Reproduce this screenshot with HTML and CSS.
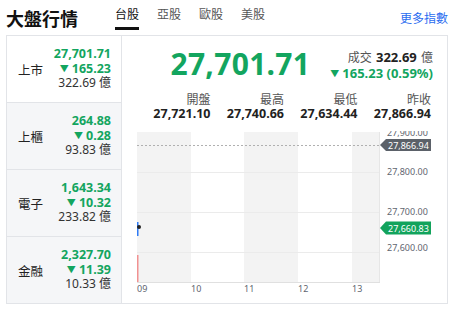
FILE: index.html
```html
<!DOCTYPE html>
<html lang="zh-Hant">

<head>
	<meta charset="utf-8">
	<meta name="viewport" content="width=device-width, initial-scale=1.0">
	<title>大盤行情</title>
	<link rel="stylesheet" href="styles.css">
</head>

<body>
	<header class="top">
		<h1 class="title">大盤行情</h1>
		<nav class="tabs">
			<a class="tab active">台股</a>
			<a class="tab">亞股</a>
			<a class="tab">歐股</a>
			<a class="tab">美股</a>
		</nav>
		<a class="more">更多指數</a>
	</header>

	<section class="board">
		<aside class="markets">
			<div class="market">
				<span class="name">上市</span>
				<div class="nums">
					<div class="price">27,701.71</div>
					<div class="change"><span class="arrow">▼</span>165.23</div>
					<div class="vol">322.69 億</div>
				</div>
			</div>
			<div class="market">
				<span class="name">上櫃</span>
				<div class="nums">
					<div class="price">264.88</div>
					<div class="change"><span class="arrow">▼</span>0.28</div>
					<div class="vol">93.83 億</div>
				</div>
			</div>
			<div class="market">
				<span class="name">電子</span>
				<div class="nums">
					<div class="price">1,643.34</div>
					<div class="change"><span class="arrow">▼</span>10.32</div>
					<div class="vol">233.82 億</div>
				</div>
			</div>
			<div class="market">
				<span class="name">金融</span>
				<div class="nums">
					<div class="price">2,327.70</div>
					<div class="change"><span class="arrow">▼</span>11.39</div>
					<div class="vol">10.33 億</div>
				</div>
			</div>
		</aside>

		<div class="detail">
			<div class="quote">
				<div class="last">27,701.71</div>
				<div class="side">
					<div class="turnover"><span class="lbl">成交</span> <b>322.69</b> <span class="lbl">億</span></div>
					<div class="diff"><span class="arrow">▼</span>165.23 (0.59%)</div>
				</div>
			</div>

			<div class="stats">
				<div class="stat"><span class="lbl">開盤</span><b>27,721.10</b></div>
				<div class="stat"><span class="lbl">最高</span><b>27,740.66</b></div>
				<div class="stat"><span class="lbl">最低</span><b>27,634.44</b></div>
				<div class="stat"><span class="lbl">昨收</span><b>27,866.94</b></div>
			</div>

			<svg class="chart" width="325" height="170" viewBox="0 0 325 170">
				<!-- bands -->
				<rect x="15" y="1" width="54" height="150" fill="#f3f3f3" />
				<rect x="69" y="1" width="53" height="150" fill="#ffffff" />
				<rect x="122" y="1" width="54" height="150" fill="#f3f3f3" />
				<rect x="176" y="1" width="54" height="150" fill="#ffffff" />
				<rect x="230" y="1" width="28" height="150" fill="#f3f3f3" />
				<!-- grid -->
				<line x1="15" y1="41.5" x2="258" y2="41.5" stroke="#ebebeb" />
				<line x1="15" y1="81.5" x2="258" y2="81.5" stroke="#ebebeb" />
				<line x1="15" y1="121.5" x2="258" y2="121.5" stroke="#ebebeb" />
				<line x1="15" y1="151.5" x2="258" y2="151.5" stroke="#e0e0e0" />
				<line x1="257.5" y1="1" x2="257.5" y2="151" stroke="#e6e6e6" />
				<line x1="15" y1="14.5" x2="258" y2="14.5" stroke="#b0b0b0" stroke-dasharray="2 2" />
				<!-- series -->
				<rect x="15" y="124" width="1.5" height="27" fill="#f19191" />
				<rect x="15" y="91" width="1.5" height="14" fill="#2f7bf5" />
				<circle cx="17" cy="96" r="2" fill="#222" />
				<!-- y axis -->
				<g class="axis">
					<text x="265" y="5">27,900.00</text>
					<text x="265" y="44">27,800.00</text>
					<text x="265" y="84">27,700.00</text>
					<text x="265" y="120">27,600.00</text>
				</g>
				<path d="M258,14 L264,8 H309 V20 H264 Z" fill="#5b6169" />
				<text class="tag" x="266" y="17.5">27,866.94</text>
				<path d="M258,97 L264,90.5 H309 V103.5 H264 Z" fill="#12a35c" />
				<text class="tag" x="266" y="100.5">27,660.83</text>
				<!-- x axis -->
				<g class="axis">
					<text x="15" y="161">09</text>
					<text x="69" y="161">10</text>
					<text x="122" y="161">11</text>
					<text x="176" y="161">12</text>
					<text x="230" y="161">13</text>
				</g>
			</svg>
		</div>
	</section>
</body>

</html>
```

FILE: styles.css
```css
body {
	margin: 0;
	padding: 0 4px 0 6px;
	background-color: white;
	color: #222;
	font-family: "Noto Sans", "Noto Sans CJK TC", sans-serif;
}

/*____________________Header____________________*/

.top {
	display: flex;
	align-items: center;
	height: 35px;
}

.title {
	margin: 0;
	font-size: 18px;
	font-weight: 700;
	color: #111;
	font-family: "Noto Sans CJK TC", sans-serif;
}

.tabs {
	display: flex;
	gap: 18px;
	margin-left: 37px;
	height: 35px;
}

.tab {
	display: flex;
	align-items: center;
	height: 30px;
	font-size: 12px;
	color: #555;
	font-family: "Noto Sans CJK TC", sans-serif;
	border-bottom: 3px solid transparent;
	box-sizing: border-box;
	margin-top: 0;
}

.tab.active {
	color: #111;
	border-bottom-color: #111;
}

.more {
	margin-left: auto;
	font-size: 12px;
	color: #2a6cf0;
	font-family: "Noto Sans CJK TC", sans-serif;
}

/*____________________Board____________________*/

.board {
	display: flex;
	border: 1px solid #e2e4e8;
	width: 442px;
	box-sizing: border-box;
}

.markets {
	width: 115px;
	border-right: 1px solid #e2e4e8;
	box-sizing: border-box;
}

.market {
	display: flex;
	align-items: center;
	justify-content: space-between;
	height: 66px;
	padding: 0 10px 0 11px;
	background-color: #f5f6f8;
	border-top: 1px solid #e2e4e8;
}

.market:first-child {
	background-color: white;
	border-top: none;
}

.name {
	font-size: 12.5px;
	font-family: "Noto Sans CJK TC", sans-serif;
	color: #222;
}

.nums {
	text-align: right;
	line-height: 14.5px;
}

.price,
.change {
	font-size: 12.5px;
	font-weight: 700;
	color: #13a55f;
}

.arrow {
	font-size: 9px;
	margin-right: 3px;
	vertical-align: 1px;
}

.vol {
	font-size: 12px;
	color: #333;
}

/*____________________Detail____________________*/

.detail {
	flex: 1;
	display: flex;
	flex-direction: column;
}

.quote {
	display: flex;
	justify-content: flex-end;
	align-items: center;
	gap: 20px;
	height: 55px;
	padding-right: 14px;
}

.last {
	font-size: 30px;
	font-weight: 700;
	color: #13a55f;
	letter-spacing: 0.3px;
}

.side {
	text-align: right;
	line-height: 16px;
	margin-top: 2px;
}

.lbl {
	font-size: 12px;
	color: #555;
	font-family: "Noto Sans CJK TC", sans-serif;
}

.turnover b {
	font-size: 13px;
	color: #222;
}

.diff {
	font-size: 13px;
	font-weight: 700;
	color: #13a55f;
}

.stats {
	display: grid;
	grid-template-columns: repeat(4, 73.5px);
	justify-content: end;
	padding-right: 16px;
	line-height: 15px;
}

.stat {
	display: flex;
	flex-direction: column;
	align-items: flex-end;
}

.stat b {
	font-size: 12.5px;
	color: #222;
}

.chart {
	display: block;
	margin-top: 10px;
}

.axis text {
	font-size: 9px;
	fill: #5f6670;
}

.tag {
	font-size: 9px;
	fill: white;
}
```
